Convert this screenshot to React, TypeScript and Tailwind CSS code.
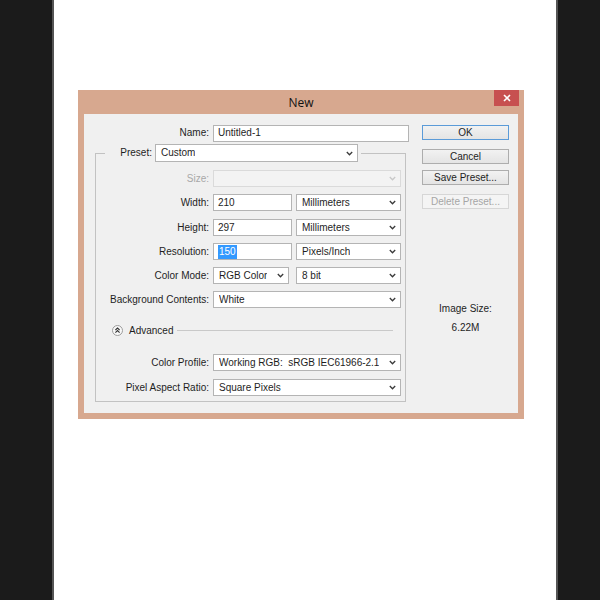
import React from "react";

function Chevron({ disabled }: { disabled?: boolean }) {
  return (
    <svg width="7" height="5" viewBox="0 0 7 5" className="shrink-0">
      <path
        d="M0.8 1 L3.5 3.8 L6.2 1"
        fill="none"
        stroke={disabled ? "#c8c8c8" : "#3a3a3a"}
        strokeWidth="1.3"
      />
    </svg>
  );
}

function Select({
  value,
  className = "",
  disabled,
}: {
  value?: string;
  className?: string;
  disabled?: boolean;
}) {
  return (
    <div
      className={
        (disabled
          ? "border-[#dadada] bg-[#f3f3f3] "
          : "border-[#b4b4b4] bg-white ") +
        "flex h-[17px] items-center justify-between border pl-[5px] pr-[4px] " +
        className
      }
    >
      <span className="overflow-hidden whitespace-pre leading-none">{value}</span>
      <Chevron disabled={disabled} />
    </div>
  );
}

function Input({ children, className = "" }: { children: React.ReactNode; className?: string }) {
  return (
    <div
      className={
        "flex h-[17px] items-center border border-[#b4b4b4] bg-white pl-[4px] leading-none " +
        className
      }
    >
      {children}
    </div>
  );
}

function Row({
  label,
  children,
  className = "",
  labelClass = "",
}: {
  label: string;
  children: React.ReactNode;
  className?: string;
  labelClass?: string;
}) {
  return (
    <div className={"flex h-[17px] items-center " + className}>
      <div className={"w-[113px] shrink-0 text-right leading-none " + labelClass}>{label}</div>
      <div className="ml-[4px] flex w-[188px] items-center">{children}</div>
    </div>
  );
}

function Button({
  children,
  className = "",
  variant = "normal",
}: {
  children: React.ReactNode;
  className?: string;
  variant?: "normal" | "default" | "disabled";
}) {
  const look =
    variant === "default"
      ? "border-[#5b9bd8] bg-linear-to-b from-[#f2f2f2] to-[#e4e4e4] text-[#1e1e1e]"
      : variant === "disabled"
      ? "border-[#d6d6d6] bg-[#f4f4f4] text-[#a6a6a6]"
      : "border-[#adadad] bg-linear-to-b from-[#f2f2f2] to-[#e4e4e4] text-[#1e1e1e]";
  return (
    <div
      className={
        "flex h-[15px] w-full items-center justify-center border leading-none " +
        look +
        " " +
        className
      }
    >
      {children}
    </div>
  );
}

function AdvancedIcon() {
  return (
    <svg width="11" height="11" viewBox="0 0 11 11" className="shrink-0">
      <circle cx="5.5" cy="5.5" r="5" fill="#f8f8f8" stroke="#9c9c9c" strokeWidth="1" />
      <path
        d="M3.4 5 L5.5 3 L7.6 5 M3.4 7.6 L5.5 5.6 L7.6 7.6"
        fill="none"
        stroke="#333"
        strokeWidth="1.1"
      />
    </svg>
  );
}

function Dialog() {
  return (
    <div className="w-[446px] bg-[#d7a88f] px-[6px] pb-[6px]">
      <div className="grid h-[24px] grid-cols-[1fr_auto_1fr]">
        <div />
        <div className="self-center pt-[2px] font-['Open_Sans',sans-serif] text-[12px] leading-none text-[#111]">
          New
        </div>
        <div className="-mr-[1px] flex h-[16px] w-[25px] items-center justify-center self-start justify-self-end bg-[#c75050]">
          <svg width="8" height="8" viewBox="0 0 8 8">
            <path d="M1 1 L7 7 M7 1 L1 7" stroke="#fff" strokeWidth="1.6" />
          </svg>
        </div>
      </div>

      <div className="flex h-[299px] bg-[#f0f0f0] pl-[11px] pt-[11px]">
        {/* left column */}
        <div className="w-[314px]">
          <div className="flex h-[16px] items-center">
            <div className="w-[114px] text-right leading-none">Name:</div>
            <Input className="ml-[4px] h-[16px] w-[196px]">Untitled-1</Input>
          </div>

          <fieldset className="mt-[3px] w-[311px] border border-[#c2c2c2] pb-[5px] pr-[4px]">
            <legend className="ml-[9px] pr-[3px]">
              <div className="flex items-center">
                <div className="w-[47px] text-right leading-none">Preset:</div>
                <Select value="Custom" className="ml-[3px] h-[18px] w-[203px]" />
              </div>
            </legend>

            <div className="pt-[8px]">
              <Row label="Size:" labelClass="text-[#a8a8a8]">
                <Select disabled className="w-[188px]" />
              </Row>
              <Row label="Width:" className="mt-[7px]">
                <Input className="w-[79px]">210</Input>
                <Select value="Millimeters" className="ml-[4px] w-[105px]" />
              </Row>
              <Row label="Height:" className="mt-[8px]">
                <Input className="w-[79px]">297</Input>
                <Select value="Millimeters" className="ml-[4px] w-[105px]" />
              </Row>
              <Row label="Resolution:" className="mt-[7px]">
                <Input className="w-[79px]">
                  <span className="bg-[#3399ff] px-[1px] py-[2px] text-white">150</span>
                </Input>
                <Select value="Pixels/Inch" className="ml-[4px] w-[105px]" />
              </Row>
              <Row label="Color Mode:" className="mt-[7px]">
                <Select value="RGB Color" className="w-[76px]" />
                <Select value="8 bit" className="ml-[7px] w-[105px]" />
              </Row>
              <Row label="Background Contents:" className="mt-[7px]">
                <Select value="White" className="w-[188px]" />
              </Row>

              <div className="mt-[14px] flex h-[17px] items-center pl-[16px] pr-[8px]">
                <AdvancedIcon />
                <span className="ml-[6px] leading-none">Advanced</span>
                <div className="ml-[4px] h-px flex-1 bg-[#c9c9c9]" />
              </div>

              <Row label="Color Profile:" className="mt-[15px]">
                <Select value="Working RGB:  sRGB IEC61966-2.1" className="w-[188px]" />
              </Row>
              <Row label="Pixel Aspect Ratio:" className="mt-[8px]">
                <Select value="Square Pixels" className="w-[188px]" />
              </Row>
            </div>
          </fieldset>
        </div>

        {/* right column */}
        <div className="ml-[13px] flex w-[87px] flex-col items-center">
          <Button variant="default">OK</Button>
          <Button className="mt-[9px]">Cancel</Button>
          <Button className="mt-[6px]">Save Preset...</Button>
          <Button className="mt-[9px]" variant="disabled">
            Delete Preset...
          </Button>
          <div className="mt-[94px] leading-[12px]">Image Size:</div>
          <div className="mt-[7px] leading-[12px]">6.22M</div>
        </div>
      </div>
    </div>
  );
}

export default function App() {
  return (
    <div className="flex h-[600px] w-[600px] font-['Liberation_Sans',Arial,sans-serif] text-[10px] text-[#1e1e1e]">
      <div className="w-[54px] border-r-2 border-[#555555] bg-[#1b1b1b]" />
      <div className="flex-1 bg-white pl-[24px] pt-[90px]">
        <Dialog />
      </div>
      <div className="w-[44px] border-l-2 border-[#555555] bg-[#1b1b1b]" />
    </div>
  );
}
